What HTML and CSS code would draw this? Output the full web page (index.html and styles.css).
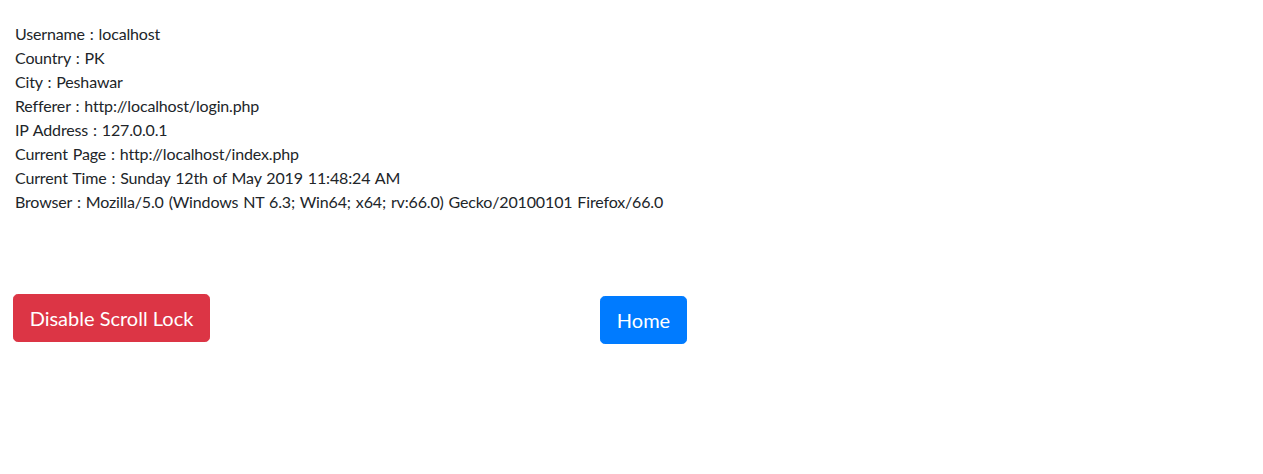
FILE: index.html
```html
<!DOCTYPE html>
<html>
<head>
<meta charset="utf-8">
<link rel="stylesheet" href="styles.css">
</head>
<body>
<div class="info">
  <div class="line">Username : localhost</div>
  <div class="line">Country : PK</div>
  <div class="line">City : Peshawar</div>
  <div class="line">Refferer : http://localhost/login.php</div>
  <div class="line">IP Address : 127.0.0.1</div>
  <div class="line">Current Page : http://localhost/index.php</div>
  <div class="line">Current Time : Sunday 12th of May 2019 11:48:24 AM</div>
  <div class="line">Browser : Mozilla/5.0 (Windows NT 6.3; Win64; x64; rv:66.0) Gecko/20100101 Firefox/66.0</div>
</div>
<div class="actions">
  <button class="btn btn-danger">Disable Scroll Lock</button>
  <button class="btn btn-primary">Home</button>
</div>
</body>
</html>
```

FILE: styles.css
```css
html, body {
  margin: 0;
  padding: 0;
  background: #fff;
}
body {
  font-family: Lato, "Open Sans", sans-serif;
  font-size: 16px;
  line-height: 24px;
  color: #212529;
}
.info {
  padding: 22px 0 0 15px;
  letter-spacing: -0.15px;
  word-spacing: 1px;
}
.actions {
  display: flex;
  align-items: flex-start;
  margin-top: 80px;
  padding-left: 13px;
}
.btn {
  font-family: inherit;
  font-size: 20px;
  line-height: 30px;
  padding: 8px 0;
  border: 1px solid transparent;
  border-radius: 4.8px;
  color: #fff;
  white-space: nowrap;
  text-align: center;
  cursor: pointer;
}
.btn-danger {
  background: #dc3545;
  border-color: #dc3545;
  width: 197px;
}
.btn-primary {
  background: #007bff;
  border-color: #007bff;
  width: 87px;
  margin-left: 390px;
  margin-top: 2px;
}
```
